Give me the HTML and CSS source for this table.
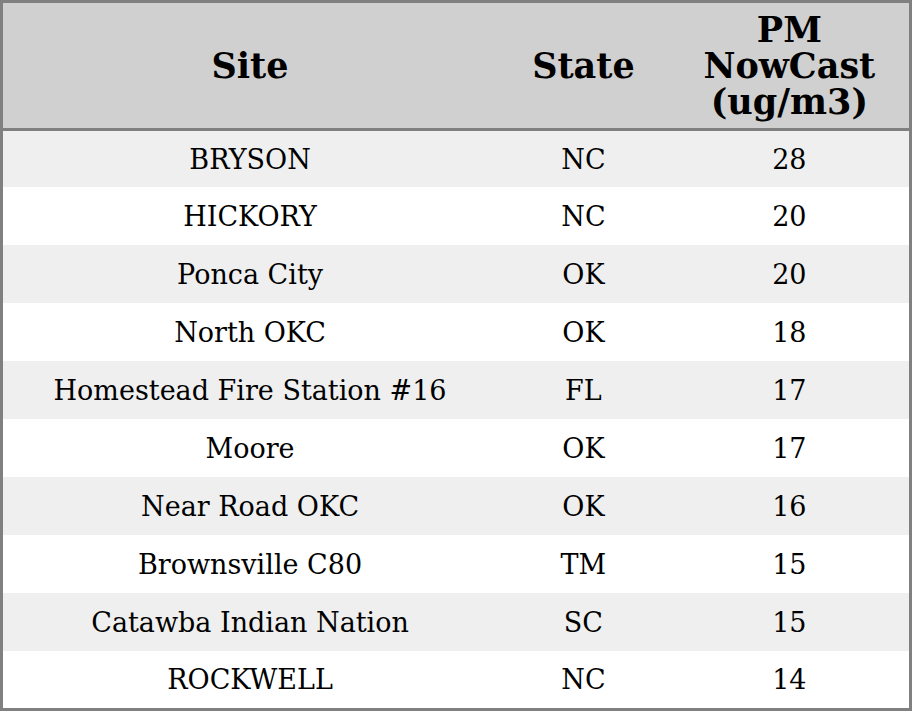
FILE: index.html
```html
<!DOCTYPE html>
<html>
<head>
<meta charset="utf-8">
<link rel="stylesheet" href="styles.css">
</head>
<body>
<table class="grid">
  <colgroup>
    <col class="c-site">
    <col class="c-state">
    <col class="c-pm">
  </colgroup>
  <thead>
    <tr class="head"><th>Site</th><th>State</th><th>PM<br>NowCast<br>(ug/m3)</th></tr>
  </thead>
  <tbody>
    <tr><td>BRYSON</td><td>NC</td><td>28</td></tr>
    <tr><td>HICKORY</td><td>NC</td><td>20</td></tr>
    <tr><td>Ponca City</td><td>OK</td><td>20</td></tr>
    <tr><td>North OKC</td><td>OK</td><td>18</td></tr>
    <tr><td>Homestead Fire Station #16</td><td>FL</td><td>17</td></tr>
    <tr><td>Moore</td><td>OK</td><td>17</td></tr>
    <tr><td>Near Road OKC</td><td>OK</td><td>16</td></tr>
    <tr><td>Brownsville C80</td><td>TM</td><td>15</td></tr>
    <tr><td>Catawba Indian Nation</td><td>SC</td><td>15</td></tr>
    <tr><td>ROCKWELL</td><td>NC</td><td>14</td></tr>
  </tbody>
</table>
</body>
</html>
```
FILE: styles.css
```css
html, body {
  margin: 0;
  padding: 0;
  background: #ffffff;
}
.grid {
  width: 912px;
  border-collapse: collapse;
  border: 3px solid #808080;
  font-family: "DejaVu Serif", serif;
  color: #000;
  table-layout: fixed;
}
.c-site { width: 494px; }
.c-state { width: 172px; }
.c-pm { width: 240px; }
.head {
  background: #d0d0d0;
  border-bottom: 3px solid #808080;
}
.head th {
  height: 125px;
  font-weight: bold;
  font-size: 35px;
  line-height: 36px;
  padding: 0;
  text-align: center;
  vertical-align: middle;
}
tbody td {
  height: 58px;
  font-size: 27px;
  text-align: center;
  vertical-align: middle;
  padding: 0;
}
tbody tr:first-child td { height: 56px; }
tbody tr:last-child td { height: 57px; }
tbody tr:nth-child(odd) { background: #efefef; }
tbody tr:nth-child(even) { background: #ffffff; }
```
